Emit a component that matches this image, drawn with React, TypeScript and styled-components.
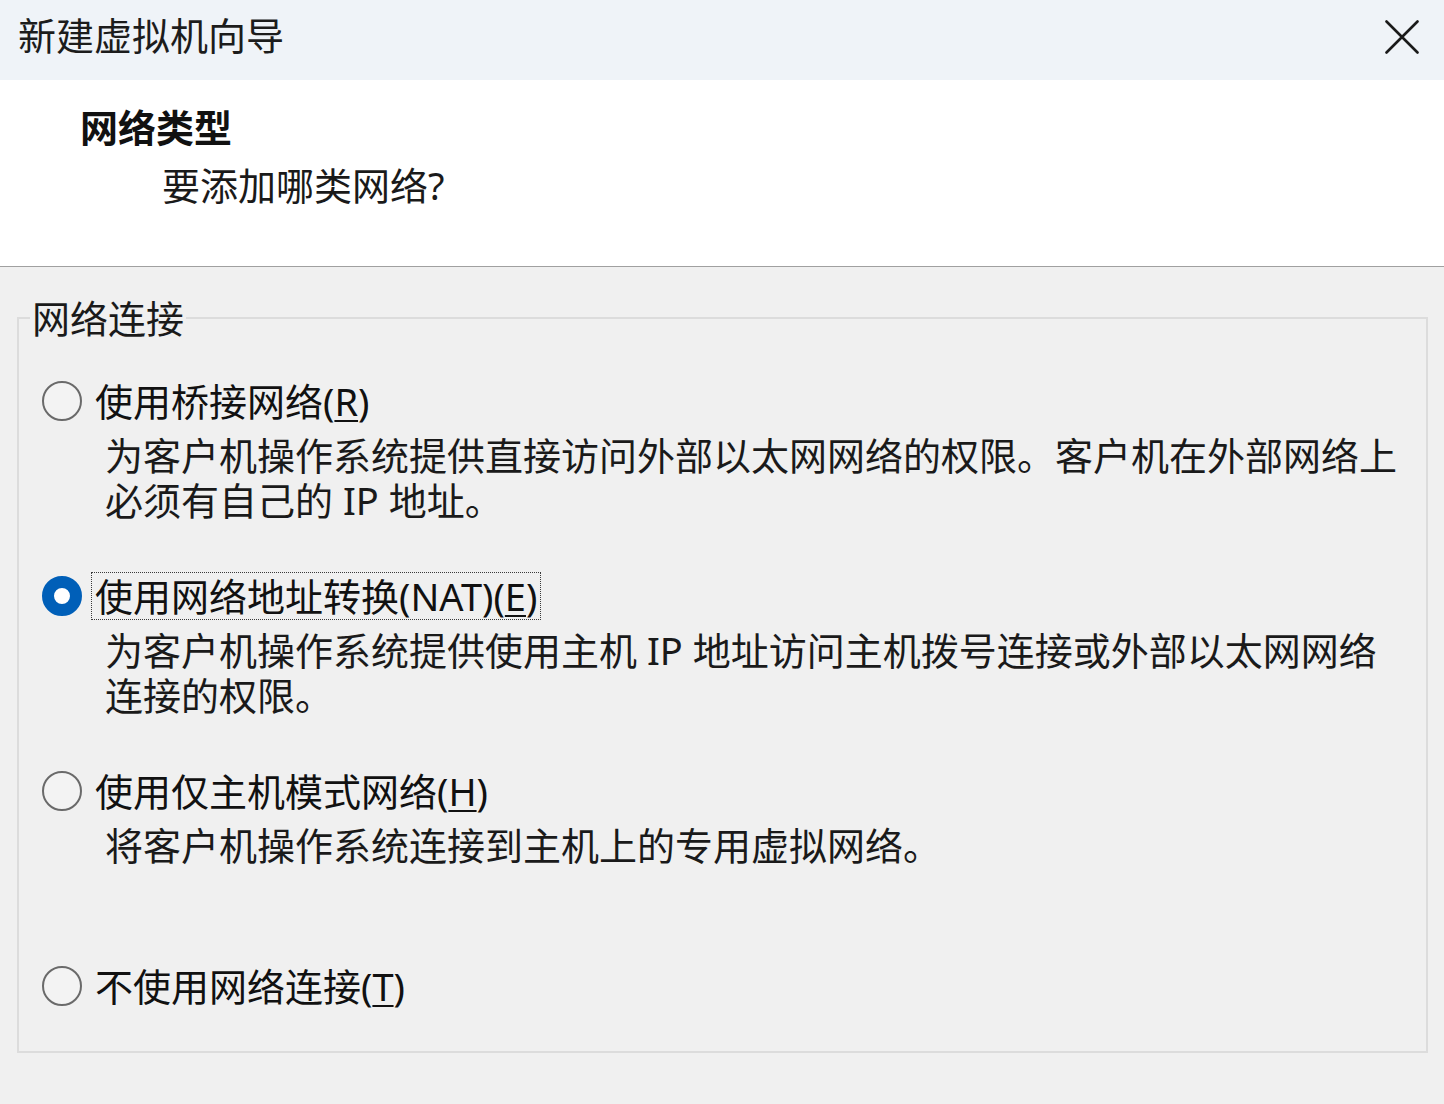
import React from "react";
import styled, { createGlobalStyle } from "styled-components";

const GlobalStyle = createGlobalStyle`
  html, body {
    margin: 0;
    padding: 0;
    background: #f0f0f0;
  }
  body {
    font-family: "Noto Sans", "Noto Sans CJK SC", sans-serif;
    color: #1a1a1a;
  }
`;

const Window = styled.div`
  width: 1444px;
  height: 1104px;
  display: flex;
  flex-direction: column;
  background: #f0f0f0;
  overflow: hidden;
`;

const TitleBar = styled.div`
  height: 80px;
  flex: none;
  display: flex;
  align-items: center;
  justify-content: space-between;
  padding: 0 24px 10px 18px;
  box-sizing: border-box;
  background: #eff3f8;
`;

const Title = styled.div`
  font-size: 38px;
  line-height: 46px;
  color: #1c1c1c;
`;

const CloseButton = styled.button`
  width: 36px;
  height: 36px;
  padding: 0;
  border: none;
  background: transparent;
  display: flex;
  align-items: center;
  justify-content: center;
  margin-top: 4px;
`;

const Header = styled.div`
  height: 187px;
  flex: none;
  box-sizing: border-box;
  background: #ffffff;
  border-bottom: 1px solid #a0a0a0;
  padding-top: 24px;
`;

const Heading = styled.div`
  font-size: 38px;
  line-height: 46px;
  font-weight: 700;
  color: #111;
  padding-left: 80px;
`;

const Subheading = styled.div`
  font-size: 38px;
  line-height: 46px;
  color: #1a1a1a;
  padding-left: 162px;
  margin-top: 12px;
`;

const Body = styled.div`
  flex: 1;
  padding: 28px 16px 0 17px;
`;

const Group = styled.fieldset`
  margin: 0;
  height: 758px;
  box-sizing: border-box;
  border: 2px solid #dcdcdc;
  padding: 0;
  min-width: 0;
`;

const Legend = styled.legend`
  font-size: 38px;
  line-height: 46px;
  color: #1a1a1a;
  margin-left: 11px;
  padding: 0 2px;
`;

const OptionList = styled.div`
  padding: 36px 0 0 23px;
`;

const Option = styled.div`
  height: 195px;
  display: flex;
  flex-direction: column;
`;

const OptionRow = styled.label`
  display: flex;
  align-items: center;
  height: 48px;
`;

const RadioCircle = styled.span<{ $checked?: boolean }>`
  width: 40px;
  height: 40px;
  box-sizing: border-box;
  border-radius: 50%;
  flex: none;
  border: ${(p) => (p.$checked ? "12px solid #005fb8" : "2.5px solid #6a6a6a")};
  background: ${(p) => (p.$checked ? "#ffffff" : "#f3f3f3")};
  margin-right: 9px;
`;

const OptionLabel = styled.span<{ $focused?: boolean }>`
  font-size: 38px;
  line-height: 46px;
  padding: 0 3px;
  border: 1px dotted ${(p) => (p.$focused ? "#3a3a3a" : "transparent")};
  color: #111;
  white-space: nowrap;
  u {
    text-decoration-thickness: 2px;
    text-underline-offset: 4px;
  }
`;

const Description = styled.div`
  font-size: 38px;
  line-height: 45px;
  color: #1a1a1a;
  margin: 8px 24px 0 63px;
`;

type OptionData = {
  text: string;
  key: string;
  desc?: string;
  checked?: boolean;
};

const options: OptionData[] = [
  {
    text: "使用桥接网络(",
    key: "R",
    desc: "为客户机操作系统提供直接访问外部以太网网络的权限。客户机在外部网络上必须有自己的 IP 地址。",
  },
  {
    text: "使用网络地址转换(NAT)(",
    key: "E",
    desc: "为客户机操作系统提供使用主机 IP 地址访问主机拨号连接或外部以太网网络连接的权限。",
    checked: true,
  },
  {
    text: "使用仅主机模式网络(",
    key: "H",
    desc: "将客户机操作系统连接到主机上的专用虚拟网络。",
  },
  {
    text: "不使用网络连接(",
    key: "T",
  },
];

export default function App() {
  return (
    <>
      <GlobalStyle />
      <Window>
        <TitleBar>
          <Title>新建虚拟机向导</Title>
          <CloseButton aria-label="关闭">
            <svg width="34" height="34" viewBox="0 0 34 34">
              <path
                d="M1.5 1.5 L32.5 32.5 M32.5 1.5 L1.5 32.5"
                stroke="#1a1a1a"
                strokeWidth="2.6"
                strokeLinecap="round"
              />
            </svg>
          </CloseButton>
        </TitleBar>
        <Header>
          <Heading>网络类型</Heading>
          <Subheading>要添加哪类网络?</Subheading>
        </Header>
        <Body>
          <Group>
            <Legend>网络连接</Legend>
            <OptionList>
              {options.map((o) => (
                <Option key={o.key}>
                  <OptionRow>
                    <RadioCircle $checked={o.checked} />
                    <OptionLabel $focused={o.checked}>
                      {o.text}
                      <u>{o.key}</u>)
                    </OptionLabel>
                  </OptionRow>
                  {o.desc && <Description>{o.desc}</Description>}
                </Option>
              ))}
            </OptionList>
          </Group>
        </Body>
      </Window>
    </>
  );
}
